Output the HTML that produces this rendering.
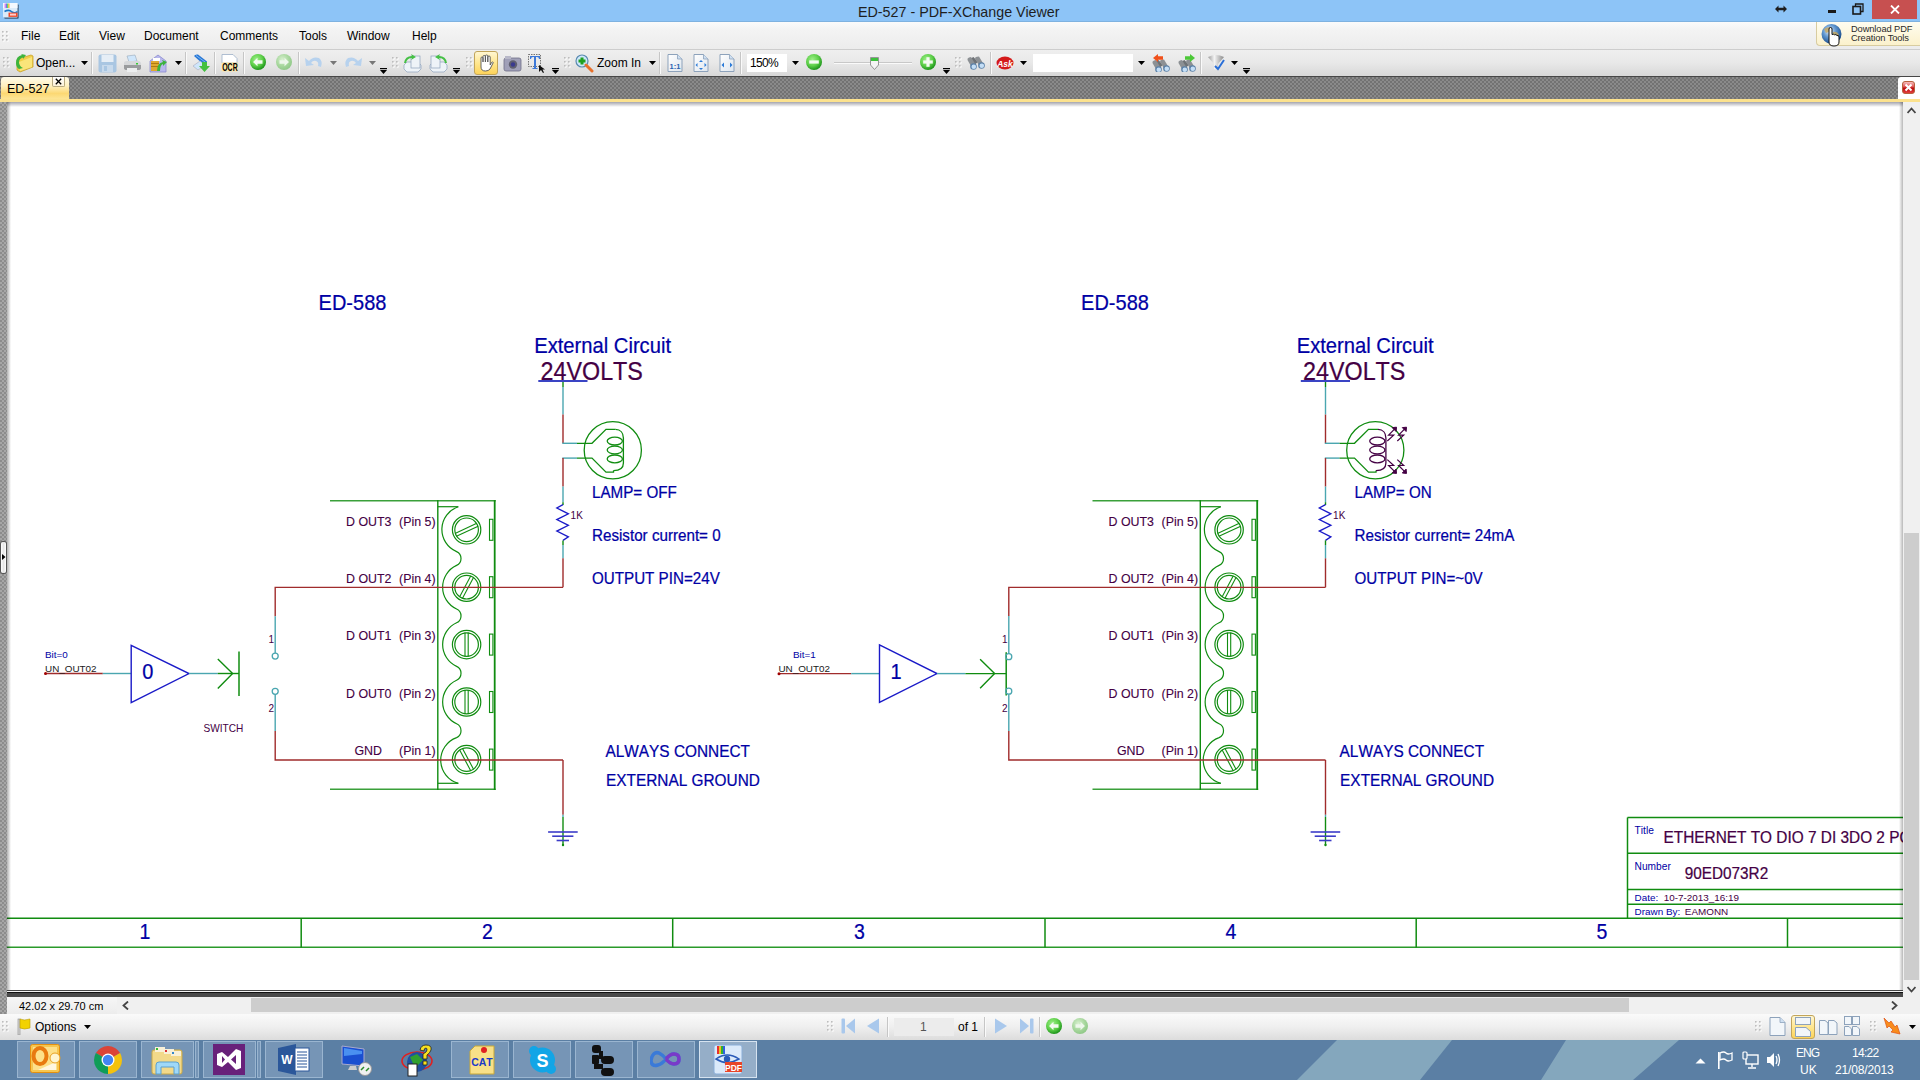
<!DOCTYPE html>
<html><head><meta charset="utf-8">
<style>
html,body{margin:0;padding:0;width:1920px;height:1080px;overflow:hidden;background:#fff;}
body{position:relative;font-family:"Liberation Sans",sans-serif;}
.a{position:absolute;}
svg text{font-family:"Liberation Sans",sans-serif;font-kerning:none;}

.tb{left:0;top:0;width:1920px;height:22px;background:#8dc4f7;box-shadow:inset 0 -1px 0 #7fb2e0;}
.menu{left:0;top:22px;width:1920px;height:27px;background:linear-gradient(#fbfbfb,#f3f3f3 30%,#ececec);}
.tool{left:0;top:49px;width:1920px;height:27px;border-top:1px solid #cdcdcd;box-sizing:border-box;background:linear-gradient(#efefef 0%,#e8e8e8 50%,#d8d8d8 100%);}
.tabbar{left:0;top:76px;width:1920px;height:23px;background-color:#727272;background-image:radial-gradient(circle at 1px 1px,#8a8a8a 0.8px,transparent 1.2px),radial-gradient(circle at 1px 1px,#8a8a8a 0.8px,transparent 1.2px);background-size:4px 4px;background-position:0 0,2px 2px;border-top:1px solid #474747;box-sizing:border-box;}
.yl{left:0;top:99px;width:1920px;height:3px;background:#fce28e;}
.lstrip{left:0;top:102px;width:7px;height:912px;background-color:#8c8c8c;background-image:radial-gradient(circle at 1px 1px,#a6a6a6 0.8px,transparent 1.2px),radial-gradient(circle at 1px 1px,#a6a6a6 0.8px,transparent 1.2px);background-size:4px 4px;background-position:0 0,2px 2px;}
.vscroll{left:1903px;top:102px;width:17px;height:895px;background:#f0f0f0;}
.mt{font-size:12px;color:#000;top:29px;line-height:14px;}
.tt{font-size:12px;color:#000;line-height:14px;}
.tbtn{top:1041px;height:37px;box-sizing:border-box;border:1px solid rgba(200,220,240,0.45);background:rgba(190,210,230,0.28);}
.wt{color:#fff;font-size:12px;line-height:14px;}

</style></head><body>
<div class="a tb"></div>
<svg class="a" style="left:3px;top:3px;" width="16" height="16" viewBox="0 0 16 16"><rect x="1.2" y="1.2" width="14.5" height="14.5" rx="1" fill="#3d5a78"/><rect x="0" y="0" width="14.5" height="14.5" rx="1" fill="#dcebfa"/><rect x="0" y="0" width="14.5" height="5" fill="#f4f8fe"/><rect x="1.3" y="0.5" width="1.3" height="4.5" fill="#f0a0f0"/><rect x="2.6" y="0.5" width="1.3" height="4.5" fill="#7a50f0"/><rect x="3.9" y="0.5" width="1.3" height="4.5" fill="#50e070"/><rect x="5.2" y="0.5" width="1.3" height="4.5" fill="#f8b030"/><path d="M1.5,8.5 Q6,6 9,9 Q12,11 14.5,8.5" fill="none" stroke="#1a78c8" stroke-width="1.6"/><rect x="5.5" y="9.6" width="9" height="4.3" fill="#f04a28"/><rect x="7" y="10.6" width="6" height="2" fill="#fcc"/></svg>
<div class="a" style="left:858px;top:4px;font-size:14.3px;line-height:17px;color:#1e1e1e;">ED-527 - PDF-XChange Viewer</div>
<svg class="a" style="left:1775px;top:5px;" width="12" height="8" viewBox="0 0 12 8"><path d="M0,4 L3.5,0.5 V2.8 H8.5 V0.5 L12,4 L8.5,7.5 V5.2 H3.5 V7.5 Z" fill="#1e1e1e"/></svg>
<div class="a" style="left:1828px;top:10px;width:8px;height:3px;background:#1a1a1a;"></div>
<svg class="a" style="left:1852px;top:3px;" width="12" height="12" viewBox="0 0 12 12"><rect x="1" y="3.5" width="7.5" height="7.5" fill="none" stroke="#1a1a1a" stroke-width="1.6"/><path d="M3.5,3.5 V1 H11 V8.5 H8.5" fill="none" stroke="#1a1a1a" stroke-width="1.3"/></svg>
<div class="a" style="left:1872px;top:0;width:45px;height:19px;background:#c75050;"></div>
<svg class="a" style="left:1890px;top:5px;" width="10" height="9" viewBox="0 0 10 9"><path d="M1,0.5 L9,8.5 M9,0.5 L1,8.5" stroke="#fff" stroke-width="1.8"/></svg>
<div class="a menu"></div>
<svg class="a" style="left:2px;top:31px;" width="8" height="12" viewBox="0 0 8 12"><rect x="1" y="1" width="1.6" height="1.6" fill="#fff"/><rect x="0" y="0" width="1.6" height="1.6" fill="#bdbdbd"/><rect x="5" y="1" width="1.6" height="1.6" fill="#fff"/><rect x="4" y="0" width="1.6" height="1.6" fill="#bdbdbd"/><rect x="1" y="5" width="1.6" height="1.6" fill="#fff"/><rect x="0" y="4" width="1.6" height="1.6" fill="#bdbdbd"/><rect x="5" y="5" width="1.6" height="1.6" fill="#fff"/><rect x="4" y="4" width="1.6" height="1.6" fill="#bdbdbd"/><rect x="1" y="9" width="1.6" height="1.6" fill="#fff"/><rect x="0" y="8" width="1.6" height="1.6" fill="#bdbdbd"/><rect x="5" y="9" width="1.6" height="1.6" fill="#fff"/><rect x="4" y="8" width="1.6" height="1.6" fill="#bdbdbd"/></svg>
<div class="a mt" style="left:21px">File</div>
<div class="a mt" style="left:59px">Edit</div>
<div class="a mt" style="left:99px">View</div>
<div class="a mt" style="left:144px">Document</div>
<div class="a mt" style="left:220px">Comments</div>
<div class="a mt" style="left:299px">Tools</div>
<div class="a mt" style="left:347px">Window</div>
<div class="a mt" style="left:412px">Help</div>
<div class="a" style="left:1816px;top:22px;width:104px;height:24px;box-sizing:border-box;border:1px solid #d8ccA0;border-top:none;border-right:none;border-radius:0 0 0 4px;background:linear-gradient(#fffdf0,#fbf1cc);"></div>
<svg class="a" style="left:1820px;top:23px;" width="24" height="24" viewBox="0 0 24 24"><defs><radialGradient id="glb" cx="40%" cy="35%" r="65%"><stop offset="0" stop-color="#e9f2fb"/><stop offset="0.5" stop-color="#5d95cf"/><stop offset="1" stop-color="#1d4f8e"/></radialGradient></defs><circle cx="11.5" cy="11" r="10" fill="url(#glb)"/><path d="M4,6 Q8,3 12,5 Q10,9 6,10 Z M13,9 Q18,8 19,13 Q16,17 13,15 Z" fill="#c9a85a" opacity="0.8"/><path d="M9,9 V19 Q9,23 14,23 Q19,23 19,19 V14 Q19,12 17,12.5 Q16,11 14.5,11.8 Q13.5,10.8 12,11.5 V6 Q12,4.5 10.5,4.5 Q9,4.5 9,6 Z" fill="#fff" stroke="#111" stroke-width="1"/></svg>
<div class="a" style="left:1851px;top:25px;font-size:9.3px;line-height:9px;color:#2a2a2a;letter-spacing:-0.1px;">Download PDF<br>Creation Tools</div>
<div class="a tool"></div>
<svg class="a" style="left:3px;top:57px;" width="8" height="12" viewBox="0 0 8 12"><rect x="1" y="1" width="1.6" height="1.6" fill="#fff"/><rect x="0" y="0" width="1.6" height="1.6" fill="#bdbdbd"/><rect x="5" y="1" width="1.6" height="1.6" fill="#fff"/><rect x="4" y="0" width="1.6" height="1.6" fill="#bdbdbd"/><rect x="1" y="5" width="1.6" height="1.6" fill="#fff"/><rect x="0" y="4" width="1.6" height="1.6" fill="#bdbdbd"/><rect x="5" y="5" width="1.6" height="1.6" fill="#fff"/><rect x="4" y="4" width="1.6" height="1.6" fill="#bdbdbd"/><rect x="1" y="9" width="1.6" height="1.6" fill="#fff"/><rect x="0" y="8" width="1.6" height="1.6" fill="#bdbdbd"/><rect x="5" y="9" width="1.6" height="1.6" fill="#fff"/><rect x="4" y="8" width="1.6" height="1.6" fill="#bdbdbd"/></svg>
<svg class="a" style="left:15px;top:54px;" width="19" height="19" viewBox="0 0 19 19"><path d="M2,6 L6,4 L16,1 L18,2 L18,13 L5,18 L2,16 Z" fill="#f1cf4a" stroke="#c9a22a" stroke-width="0.8"/><path d="M4,8 L17,3 V13 L5,17 Z" fill="#fae57a"/><path d="M1,9 Q1,2 7,1 L6,0 L11,1 L8,5 L8,3.5 Q4,4 4,9 Q5,13 8,14 L4,15 Q1,13 1,9 Z" fill="#3cb43c"/></svg>
<div class="a tt" style="left:36px;top:56px;">Open...</div>
<svg class="a" style="left:81px;top:61px;" width="7" height="4" viewBox="0 0 7 4"><path d="M0,0 H7 L3.5,4 Z" fill="#000"/></svg>
<div class="a" style="left:91px;top:52px;width:1px;height:22px;background:#c6c6c6;border-right:1px solid #fafafa;"></div>
<svg class="a" style="left:98px;top:54px;" width="19" height="19" viewBox="0 0 19 19"><rect x="0.5" y="0.5" width="18" height="18" rx="2" fill="#a9c6e2"/><rect x="3.5" y="1" width="12" height="7" fill="#e6eef6"/><rect x="4" y="11" width="11" height="7" fill="#c8daec"/><rect x="6" y="12" width="3" height="5" fill="#a9c6e2"/></svg>
<svg class="a" style="left:123px;top:54px;" width="19" height="19" viewBox="0 0 19 19"><path d="M4,2 L12,1 L14,7 L6,8 Z" fill="#cfe6fb" stroke="#9ab" stroke-width="0.6"/><path d="M1,9 Q1,7 4,7 H15 Q18,7 18,10 V14 Q18,16 15,16 H4 Q1,16 1,14 Z" fill="#d6d8da"/><path d="M1,11 H18 V14 Q18,16 15,16 H4 Q1,16 1,14 Z" fill="#9a9c9e"/><rect x="4" y="14" width="10" height="4" fill="#eceeef"/><rect x="13" y="9" width="2" height="1.5" fill="#3c3"/></svg>
<svg class="a" style="left:149px;top:54px;" width="19" height="19" viewBox="0 0 19 19"><path d="M1,7 L9,1 L17,7 V18 H1 Z" fill="#b8b8ec" stroke="#8a8ad0" stroke-width="0.8"/><rect x="2" y="7" width="8" height="10" fill="#e0a830"/><rect x="2" y="9" width="8" height="1" fill="#b07a10"/><rect x="2" y="12" width="8" height="1" fill="#b07a10"/><rect x="4" y="4" width="7" height="3" fill="#fff"/><path d="M8,17 Q8,9 14,8 L13,6 L18,8 L14,12 L14,10 Q11,11 11,17 Z" fill="#3cb43c"/></svg>
<svg class="a" style="left:175px;top:61px;" width="7" height="4" viewBox="0 0 7 4"><path d="M0,0 H7 L3.5,4 Z" fill="#000"/></svg>
<div class="a" style="left:185px;top:52px;width:1px;height:22px;background:#c6c6c6;border-right:1px solid #fafafa;"></div>
<svg class="a" style="left:192px;top:54px;" width="19" height="19" viewBox="0 0 19 19"><path d="M2,2 Q3,0 6,0.5 L15,7.5 L15,10 L11,10 Z" fill="#2a78d6"/><path d="M4,1.5 L13,8" stroke="#7ab8f4" stroke-width="1"/><path d="M1,12 L8,7 L13,11 L6,16 Z" fill="#cfe6fb" stroke="#aab" stroke-width="0.6"/><path d="M10,8 H15 V12 H18 L12.5,18 L7,12 H10 Z" fill="#44c040"/></svg>
<div class="a" style="left:214px;top:52px;width:1px;height:22px;background:#c6c6c6;border-right:1px solid #fafafa;"></div>
<svg class="a" style="left:221px;top:54px;" width="18" height="18" viewBox="0 0 18 18"><path d="M1,0.5 H12 L16,4.5 V9 H1 Z" fill="#fff" stroke="#9db0c8" stroke-width="0.8"/><rect x="0.5" y="8.5" width="16.5" height="9" rx="1" fill="#fde7a6"/><text x="1.2" y="17" font-size="10" font-weight="bold" textLength="15.5" lengthAdjust="spacingAndGlyphs" fill="#000" font-family="Liberation Sans">OCR</text></svg>
<div class="a" style="left:243px;top:52px;width:1px;height:22px;background:#c6c6c6;border-right:1px solid #fafafa;"></div>
<svg class="a" style="left:249px;top:53px;" width="18" height="18" viewBox="0 0 18 18"><defs><radialGradient id="g25862" cx="40%" cy="35%" r="70%"><stop offset="0" stop-color="#9ef08a"/><stop offset="0.55" stop-color="#5fd04a"/><stop offset="1" stop-color="#128a12"/></radialGradient></defs><circle cx="9" cy="9" r="8" fill="url(#g25862)"/><path d="M4,9 L8.5,4.8 V7.3 H13.5 V10.7 H8.5 V13.2 Z" fill="#f4fbf2"/></svg>
<svg class="a" style="left:275px;top:53px;" width="18" height="18" viewBox="0 0 18 18"><defs><radialGradient id="g28462" cx="40%" cy="35%" r="70%"><stop offset="0" stop-color="#d8f0d0"/><stop offset="0.55" stop-color="#a9d89f"/><stop offset="1" stop-color="#8cc684"/></radialGradient></defs><circle cx="9" cy="9" r="8" fill="url(#g28462)"/><path d="M14,9 L9.5,4.8 V7.3 H4.5 V10.7 H9.5 V13.2 Z" fill="#eef7ec"/></svg>
<div class="a" style="left:298px;top:52px;width:1px;height:22px;background:#c6c6c6;border-right:1px solid #fafafa;"></div>
<svg class="a" style="left:304px;top:54px;" width="20" height="17" viewBox="0 0 20 17"><path d="M2,12 L1,4 L5,7 Q9,2 15,4 Q19,7 17,13 L14,12 Q15,8 12,7 Q9,6 7,9 L10,11 Z" fill="#b7d2ee"/></svg>
<svg class="a" style="left:330px;top:61px;" width="7" height="4" viewBox="0 0 7 4"><path d="M0,0 H7 L3.5,4 Z" fill="#777"/></svg>
<svg class="a" style="left:343px;top:54px;" width="20" height="17" viewBox="0 0 20 17"><path d="M18,12 L19,4 L15,7 Q11,2 5,4 Q1,7 3,13 L6,12 Q5,8 8,7 Q11,6 13,9 L10,11 Z" fill="#b7d2ee"/></svg>
<svg class="a" style="left:369px;top:61px;" width="7" height="4" viewBox="0 0 7 4"><path d="M0,0 H7 L3.5,4 Z" fill="#777"/></svg>
<svg class="a" style="left:380px;top:68px;" width="7" height="6" viewBox="0 0 7 6"><rect x="0" y="0" width="7" height="1.2" fill="#000"/><path d="M0,2 H7 L3.5,6 Z" fill="#000"/></svg>
<svg class="a" style="left:392px;top:57px;" width="8" height="12" viewBox="0 0 8 12"><rect x="1" y="1" width="1.6" height="1.6" fill="#fff"/><rect x="0" y="0" width="1.6" height="1.6" fill="#bdbdbd"/><rect x="5" y="1" width="1.6" height="1.6" fill="#fff"/><rect x="4" y="0" width="1.6" height="1.6" fill="#bdbdbd"/><rect x="1" y="5" width="1.6" height="1.6" fill="#fff"/><rect x="0" y="4" width="1.6" height="1.6" fill="#bdbdbd"/><rect x="5" y="5" width="1.6" height="1.6" fill="#fff"/><rect x="4" y="4" width="1.6" height="1.6" fill="#bdbdbd"/><rect x="1" y="9" width="1.6" height="1.6" fill="#fff"/><rect x="0" y="8" width="1.6" height="1.6" fill="#bdbdbd"/><rect x="5" y="9" width="1.6" height="1.6" fill="#fff"/><rect x="4" y="8" width="1.6" height="1.6" fill="#bdbdbd"/></svg>
<svg class="a" style="left:403px;top:54px;" width="19" height="19" viewBox="0 0 19 19"><path d="M1,11 L4,8 H15 L18,11 V15 L15,18 H4 L1,15 Z" fill="#eef3f8" stroke="#8da2bb" stroke-width="0.7"/><rect x="8" y="2" width="9" height="12" fill="#eef3f8" stroke="#8da2bb" stroke-width="0.7"/><path d="M1,9 Q2,2 9,2 L8,0 L13,3 L8,6 L9,4 Q4,4 3,9 Z" fill="#45c045"/></svg>
<svg class="a" style="left:429px;top:54px;" width="19" height="19" viewBox="0 0 19 19"><path d="M1,11 L4,8 H15 L18,11 V15 L15,18 H4 L1,15 Z" fill="#eef3f8" stroke="#8da2bb" stroke-width="0.7"/><rect x="2" y="2" width="9" height="12" fill="#eef3f8" stroke="#8da2bb" stroke-width="0.7"/><path d="M18,9 Q17,2 10,2 L11,0 L6,3 L11,6 L10,4 Q15,4 16,9 Z" fill="#45c045"/></svg>
<svg class="a" style="left:453px;top:68px;" width="7" height="6" viewBox="0 0 7 6"><rect x="0" y="0" width="7" height="1.2" fill="#000"/><path d="M0,2 H7 L3.5,6 Z" fill="#000"/></svg>
<svg class="a" style="left:466px;top:57px;" width="8" height="12" viewBox="0 0 8 12"><rect x="1" y="1" width="1.6" height="1.6" fill="#fff"/><rect x="0" y="0" width="1.6" height="1.6" fill="#bdbdbd"/><rect x="5" y="1" width="1.6" height="1.6" fill="#fff"/><rect x="4" y="0" width="1.6" height="1.6" fill="#bdbdbd"/><rect x="1" y="5" width="1.6" height="1.6" fill="#fff"/><rect x="0" y="4" width="1.6" height="1.6" fill="#bdbdbd"/><rect x="5" y="5" width="1.6" height="1.6" fill="#fff"/><rect x="4" y="4" width="1.6" height="1.6" fill="#bdbdbd"/><rect x="1" y="9" width="1.6" height="1.6" fill="#fff"/><rect x="0" y="8" width="1.6" height="1.6" fill="#bdbdbd"/><rect x="5" y="9" width="1.6" height="1.6" fill="#fff"/><rect x="4" y="8" width="1.6" height="1.6" fill="#bdbdbd"/></svg>
<div class="a" style="left:474px;top:51px;width:24px;height:24px;box-sizing:border-box;border:1px solid #c2a55a;border-radius:3px;background:linear-gradient(#fff6d2,#ffe58a 55%,#fdd35a);"></div>
<svg class="a" style="left:477px;top:54px;" width="18" height="18" viewBox="0 0 18 18"><path d="M4,9 V4 Q4,3 5,3 Q6,3 6,4 V8 V2.5 Q6,1.5 7.2,1.5 Q8.4,1.5 8.4,2.5 V8 V2 Q8.4,1 9.6,1 Q10.8,1 10.8,2 V8 V3 Q10.8,2 12,2 Q13.2,2 13.2,3 V11 L14.5,8.5 Q15.5,7.5 16.3,8.5 L13,15 Q11.5,17 8.5,17 Q4,17 4,13 Z" fill="#fff" stroke="#555" stroke-width="0.9"/></svg>
<svg class="a" style="left:503px;top:55px;" width="19" height="17" viewBox="0 0 19 17"><rect x="1" y="3" width="17" height="13" rx="2" fill="#a0a0b8" stroke="#707088" stroke-width="0.8"/><rect x="2" y="1" width="6" height="3" fill="#b8b8c8"/><circle cx="10" cy="9.5" r="4.2" fill="#606070"/><circle cx="10" cy="9.5" r="2.2" fill="#3a3a90"/></svg>
<svg class="a" style="left:528px;top:54px;" width="19" height="19" viewBox="0 0 19 19"><rect x="0.5" y="0.5" width="12" height="12" fill="none" stroke="#555" stroke-width="0.8" stroke-dasharray="1.5,1"/><path d="M2,2 H12 V5 H11 Q11,3 9,3 H8 V14 H9.5 V15 H4.5 V14 H6 V3 H5 Q3,3 3,5 H2 Z" fill="#3c78d8"/><path d="M11,11 L11,18 L13,16 L15,19 L16,18.5 L14.5,15.5 L17,15.5 Z" fill="#111"/></svg>
<svg class="a" style="left:552px;top:68px;" width="7" height="6" viewBox="0 0 7 6"><rect x="0" y="0" width="7" height="1.2" fill="#000"/><path d="M0,2 H7 L3.5,6 Z" fill="#000"/></svg>
<svg class="a" style="left:564px;top:57px;" width="8" height="12" viewBox="0 0 8 12"><rect x="1" y="1" width="1.6" height="1.6" fill="#fff"/><rect x="0" y="0" width="1.6" height="1.6" fill="#bdbdbd"/><rect x="5" y="1" width="1.6" height="1.6" fill="#fff"/><rect x="4" y="0" width="1.6" height="1.6" fill="#bdbdbd"/><rect x="1" y="5" width="1.6" height="1.6" fill="#fff"/><rect x="0" y="4" width="1.6" height="1.6" fill="#bdbdbd"/><rect x="5" y="5" width="1.6" height="1.6" fill="#fff"/><rect x="4" y="4" width="1.6" height="1.6" fill="#bdbdbd"/><rect x="1" y="9" width="1.6" height="1.6" fill="#fff"/><rect x="0" y="8" width="1.6" height="1.6" fill="#bdbdbd"/><rect x="5" y="9" width="1.6" height="1.6" fill="#fff"/><rect x="4" y="8" width="1.6" height="1.6" fill="#bdbdbd"/></svg>
<svg class="a" style="left:575px;top:54px;" width="19" height="19" viewBox="0 0 19 19"><circle cx="7" cy="7" r="6" fill="#cfe8fb" stroke="#5a8ab0" stroke-width="1.2"/><path d="M5.5,3.5 H8.5 V5.5 H10.5 V8.5 H8.5 V10.5 H5.5 V8.5 H3.5 V5.5 H5.5 Z" fill="#20a020"/><path d="M11,11 L17,17" stroke="#e8702a" stroke-width="3" stroke-linecap="round"/></svg>
<div class="a tt" style="left:597px;top:56px;">Zoom In</div>
<svg class="a" style="left:649px;top:61px;" width="7" height="4" viewBox="0 0 7 4"><path d="M0,0 H7 L3.5,4 Z" fill="#000"/></svg>
<div class="a" style="left:659px;top:52px;width:1px;height:22px;background:#c6c6c6;border-right:1px solid #fafafa;"></div>
<svg class="a" style="left:667px;top:54px;" width="16" height="18" viewBox="0 0 16 18"><defs><linearGradient id="pg" x1="0" y1="0" x2="1" y2="1"><stop offset="0" stop-color="#ffffff"/><stop offset="1" stop-color="#dfe6ee"/></linearGradient></defs><path d="M1,0.5 H10.5 L15,5 V17.5 H1 Z" fill="url(#pg)" stroke="#8da2bb" stroke-width="1"/><path d="M10.5,0.5 V5 H15" fill="#cfe0f2" stroke="#8da2bb" stroke-width="0.8"/><text x="8" y="15" font-size="7.5" font-weight="bold" text-anchor="middle" fill="#2a62b0" font-family="Liberation Sans">1:1</text></svg>
<svg class="a" style="left:693px;top:54px;" width="16" height="18" viewBox="0 0 16 18"><defs><linearGradient id="pg" x1="0" y1="0" x2="1" y2="1"><stop offset="0" stop-color="#ffffff"/><stop offset="1" stop-color="#dfe6ee"/></linearGradient></defs><path d="M1,0.5 H10.5 L15,5 V17.5 H1 Z" fill="url(#pg)" stroke="#8da2bb" stroke-width="1"/><path d="M10.5,0.5 V5 H15" fill="#cfe0f2" stroke="#8da2bb" stroke-width="0.8"/><path d="M8,6 L10,8 H6 Z M8,16 L10,14 H6 Z M2.5,11 L4.5,9 V13 Z M13.5,11 L11.5,9 V13 Z" fill="#2a7ad8"/></svg>
<svg class="a" style="left:719px;top:54px;" width="16" height="18" viewBox="0 0 16 18"><defs><linearGradient id="pg" x1="0" y1="0" x2="1" y2="1"><stop offset="0" stop-color="#ffffff"/><stop offset="1" stop-color="#dfe6ee"/></linearGradient></defs><path d="M1,0.5 H10.5 L15,5 V17.5 H1 Z" fill="url(#pg)" stroke="#8da2bb" stroke-width="1"/><path d="M10.5,0.5 V5 H15" fill="#cfe0f2" stroke="#8da2bb" stroke-width="0.8"/><path d="M2.5,11 L5,8.5 V13.5 Z M13.5,11 L11,8.5 V13.5 Z" fill="#2a7ad8"/></svg>
<div class="a" style="left:740px;top:52px;width:1px;height:22px;background:#c6c6c6;border-right:1px solid #fafafa;"></div>
<div class="a" style="left:747px;top:54px;width:40px;height:18px;background:#fff;"></div>
<div class="a tt" style="left:750px;top:56px;letter-spacing:-0.7px;">150%</div>
<svg class="a" style="left:792px;top:61px;" width="7" height="4" viewBox="0 0 7 4"><path d="M0,0 H7 L3.5,4 Z" fill="#000"/></svg>
<svg class="a" style="left:805px;top:53px;" width="18" height="18" viewBox="0 0 18 18"><defs><radialGradient id="g81462" cx="40%" cy="35%" r="70%"><stop offset="0" stop-color="#9ef08a"/><stop offset="0.55" stop-color="#5fd04a"/><stop offset="1" stop-color="#128a12"/></radialGradient></defs><circle cx="9" cy="9" r="8" fill="url(#g81462)"/><rect x="4.2" y="7.4" width="9.6" height="3.2" fill="#f4fbf2"/></svg>
<div class="a" style="left:834px;top:62px;width:78px;height:1px;background:#c8c8c8;border-bottom:1px solid #fafafa;"></div>
<svg class="a" style="left:870px;top:57px;" width="9" height="13" viewBox="0 0 9 13"><path d="M0.5,0.5 H8.5 V8 L4.5,12.5 L0.5,8 Z" fill="#f4f4f4" stroke="#8a8a8a" stroke-width="0.9"/><rect x="1" y="1" width="7" height="3" fill="#3cc03c"/></svg>
<svg class="a" style="left:919px;top:53px;" width="18" height="18" viewBox="0 0 18 18"><defs><radialGradient id="g92862" cx="40%" cy="35%" r="70%"><stop offset="0" stop-color="#9ef08a"/><stop offset="0.55" stop-color="#5fd04a"/><stop offset="1" stop-color="#128a12"/></radialGradient></defs><circle cx="9" cy="9" r="8" fill="url(#g92862)"/><rect x="4.2" y="7.4" width="9.6" height="3.2" fill="#f4fbf2"/><rect x="7.4" y="4.2" width="3.2" height="9.6" fill="#f4fbf2"/></svg>
<svg class="a" style="left:943px;top:68px;" width="7" height="6" viewBox="0 0 7 6"><rect x="0" y="0" width="7" height="1.2" fill="#000"/><path d="M0,2 H7 L3.5,6 Z" fill="#000"/></svg>
<svg class="a" style="left:955px;top:57px;" width="8" height="12" viewBox="0 0 8 12"><rect x="1" y="1" width="1.6" height="1.6" fill="#fff"/><rect x="0" y="0" width="1.6" height="1.6" fill="#bdbdbd"/><rect x="5" y="1" width="1.6" height="1.6" fill="#fff"/><rect x="4" y="0" width="1.6" height="1.6" fill="#bdbdbd"/><rect x="1" y="5" width="1.6" height="1.6" fill="#fff"/><rect x="0" y="4" width="1.6" height="1.6" fill="#bdbdbd"/><rect x="5" y="5" width="1.6" height="1.6" fill="#fff"/><rect x="4" y="4" width="1.6" height="1.6" fill="#bdbdbd"/><rect x="1" y="9" width="1.6" height="1.6" fill="#fff"/><rect x="0" y="8" width="1.6" height="1.6" fill="#bdbdbd"/><rect x="5" y="9" width="1.6" height="1.6" fill="#fff"/><rect x="4" y="8" width="1.6" height="1.6" fill="#bdbdbd"/></svg>
<svg class="a" style="left:966px;top:55px;" width="20" height="16" viewBox="0 0 20 16"><g><path d="M2.5,4.5 L7.5,2 L12,7 L7,11 Z" fill="#6e7276"/><path d="M1.5,5 Q1,3 3,2.5 L5,2 L9.5,9.5 L5.5,12 Z" fill="#8c9094"/><path d="M9,3.5 Q9,2 11,1.8 L13,1.5 L17.5,9 L13.5,11.5 Z" fill="#8c9094"/><circle cx="7.5" cy="11.5" r="3.3" fill="#5a80a8"/><circle cx="7.8" cy="11.7" r="2.3" fill="#c4def6"/><circle cx="15.5" cy="10.5" r="3.3" fill="#5a80a8"/><circle cx="15.8" cy="10.7" r="2.3" fill="#c4def6"/></g></svg>
<div class="a" style="left:990px;top:52px;width:1px;height:22px;background:#c6c6c6;border-right:1px solid #fafafa;"></div>
<svg class="a" style="left:996px;top:56px;" width="18" height="14" viewBox="0 0 18 14"><ellipse cx="9" cy="7" rx="8.5" ry="6.5" fill="#d41a1a"/><text x="9" y="10.5" font-size="8.5" font-weight="bold" font-style="italic" text-anchor="middle" fill="#fff" font-family="Liberation Sans">Ask</text></svg>
<svg class="a" style="left:1020px;top:61px;" width="7" height="4" viewBox="0 0 7 4"><path d="M0,0 H7 L3.5,4 Z" fill="#000"/></svg>
<div class="a" style="left:1033px;top:54px;width:100px;height:18px;background:#fff;"></div>
<svg class="a" style="left:1138px;top:61px;" width="7" height="4" viewBox="0 0 7 4"><path d="M0,0 H7 L3.5,4 Z" fill="#000"/></svg>
<svg class="a" style="left:1151px;top:54px;" width="20" height="18" viewBox="0 0 20 18"><g transform="translate(0,4)"><g><path d="M2.5,4.5 L7.5,2 L12,7 L7,11 Z" fill="#6e7276"/><path d="M1.5,5 Q1,3 3,2.5 L5,2 L9.5,9.5 L5.5,12 Z" fill="#8c9094"/><path d="M9,3.5 Q9,2 11,1.8 L13,1.5 L17.5,9 L13.5,11.5 Z" fill="#8c9094"/><circle cx="7.5" cy="11.5" r="3.3" fill="#5a80a8"/><circle cx="7.8" cy="11.7" r="2.3" fill="#c4def6"/><circle cx="15.5" cy="10.5" r="3.3" fill="#5a80a8"/><circle cx="15.8" cy="10.7" r="2.3" fill="#c4def6"/></g></g><path d="M2,4 L7,0 V2.2 H12 V5.8 H7 V8 Z" fill="#f0501a"/></svg>
<svg class="a" style="left:1177px;top:54px;" width="20" height="18" viewBox="0 0 20 18"><g transform="translate(0,4)"><g><path d="M2.5,4.5 L7.5,2 L12,7 L7,11 Z" fill="#6e7276"/><path d="M1.5,5 Q1,3 3,2.5 L5,2 L9.5,9.5 L5.5,12 Z" fill="#8c9094"/><path d="M9,3.5 Q9,2 11,1.8 L13,1.5 L17.5,9 L13.5,11.5 Z" fill="#8c9094"/><circle cx="7.5" cy="11.5" r="3.3" fill="#5a80a8"/><circle cx="7.8" cy="11.7" r="2.3" fill="#c4def6"/><circle cx="15.5" cy="10.5" r="3.3" fill="#5a80a8"/><circle cx="15.8" cy="10.7" r="2.3" fill="#c4def6"/></g></g><path d="M18,4 L13,0 V2.2 H8 V5.8 H13 V8 Z" fill="#4cc838"/></svg>
<div class="a" style="left:1200px;top:52px;width:1px;height:22px;background:#c6c6c6;border-right:1px solid #fafafa;"></div>
<svg class="a" style="left:1207px;top:54px;" width="19" height="18" viewBox="0 0 19 18"><defs><linearGradient id="fn" x1="0" x2="1"><stop offset="0" stop-color="#9a9a9a"/><stop offset="0.4" stop-color="#f4f4f4"/><stop offset="1" stop-color="#888"/></linearGradient></defs><path d="M1,3 Q9,-1 17,3 L11,10 V17 L7,15 V10 Z" fill="url(#fn)"/><path d="M8,12 L11,15 L17,6" fill="none" stroke="#2a6fd8" stroke-width="2"/></svg>
<svg class="a" style="left:1231px;top:61px;" width="7" height="4" viewBox="0 0 7 4"><path d="M0,0 H7 L3.5,4 Z" fill="#000"/></svg>
<svg class="a" style="left:1243px;top:68px;" width="7" height="6" viewBox="0 0 7 6"><rect x="0" y="0" width="7" height="1.2" fill="#000"/><path d="M0,2 H7 L3.5,6 Z" fill="#000"/></svg>
<div class="a tabbar"></div>
<div class="a" style="left:1px;top:77px;width:68px;height:22px;background:linear-gradient(#fffbea,#fff1c0 40%,#fcd873 75%,#fde595);border-radius:3px 3px 0 0;"></div>
<div class="a" style="left:52px;top:77px;width:13px;height:10px;box-sizing:border-box;border:1px solid #b8aa80;border-top:none;border-radius:0 0 2px 2px;background:linear-gradient(#fff,#fdf3d8);"></div>
<svg class="a" style="left:55px;top:78px;" width="7" height="7" viewBox="0 0 7 7"><path d="M0.8,0.8 L6.2,6.2 M6.2,0.8 L0.8,6.2" stroke="#000" stroke-width="1.3"/></svg>
<div class="a" style="left:7px;top:82px;font-size:12.5px;line-height:14px;color:#000;">ED-527</div>
<div class="a" style="left:1898px;top:77px;width:22px;height:22px;background:#fff;border-radius:3px 0 0 0;"></div>
<svg class="a" style="left:1902px;top:81px;" width="13" height="13" viewBox="0 0 13 13"><defs><linearGradient id="rc" x1="0" y1="0" x2="0" y2="1"><stop offset="0" stop-color="#f8c8c8"/><stop offset="0.45" stop-color="#e05050"/><stop offset="0.55" stop-color="#b80c0c"/><stop offset="1" stop-color="#e84040"/></linearGradient></defs><rect x="0.5" y="0.5" width="12" height="12" rx="2.5" fill="url(#rc)" stroke="#b8603c"/><path d="M3.5,3.5 L9.5,9.5 M9.5,3.5 L3.5,9.5" stroke="#fff" stroke-width="2"/></svg>
<div class="a yl"></div>
<div class="a lstrip"></div>
<div class="a vscroll"></div>
<div class="a" style="left:1px;top:542px;width:5px;height:31px;background:linear-gradient(90deg,#fff,#e6e6e6 50%,#fff);border-radius:2px;box-shadow:0 0 0 1px #555;"></div>
<svg class="a" style="left:2px;top:554px;" width="4" height="6" viewBox="0 0 4 6"><path d="M0,0 L3.5,3 L0,6 Z" fill="#000"/></svg>
<svg class="a" style="left:1907px;top:107px;" width="9" height="7" viewBox="0 0 9 7"><path d="M0.5,6 L4.5,1.5 L8.5,6" fill="none" stroke="#444" stroke-width="1.8"/></svg>
<div class="a" style="left:7px;top:102px;width:1896px;height:895px;overflow:hidden;background:#fff;">
<svg width="1920" height="1080" style="position:absolute;left:-7px;top:-102px;">
<text transform="translate(318.6,309.7) scale(1,1.09)" x="0" y="0" font-size="20" fill="#0000a4" stroke="#0000a4" stroke-width="0.22" text-anchor="start" >ED-588</text>
<text transform="translate(534.2,352.7) scale(1,1.09)" x="0" y="0" font-size="20.2" fill="#0000a4" stroke="#0000a4" stroke-width="0.22" text-anchor="start" >External Circuit</text>
<text transform="translate(540.6,380) scale(1,1.09)" x="0" y="0" font-size="23.3" fill="#440044" stroke="#440044" stroke-width="0.22" text-anchor="start" >24VOLTS</text>
<line x1="538.3" y1="381" x2="587.5" y2="381" stroke="#3a44c4" stroke-width="2" />
<line x1="563" y1="382" x2="563" y2="387" stroke="#108c10" stroke-width="1.4" />
<line x1="563" y1="387" x2="563" y2="414.6" stroke="#4aa6b0" stroke-width="1.4" />
<line x1="563" y1="414.6" x2="563" y2="443.3" stroke="#a02c2c" stroke-width="1.4" />
<line x1="562.3" y1="443.3" x2="577" y2="443.3" stroke="#4aa6b0" stroke-width="1.4" />
<line x1="562.3" y1="458.1" x2="577" y2="458.1" stroke="#4aa6b0" stroke-width="1.4" />
<line x1="563" y1="458.1" x2="563" y2="486.6" stroke="#a02c2c" stroke-width="1.4" />
<line x1="563" y1="486.6" x2="563" y2="502.2" stroke="#4aa6b0" stroke-width="1.4" />
<line x1="563" y1="502.2" x2="563" y2="505" stroke="#108c10" stroke-width="1.4" />
<path d="M563,504.6 L556.8,508 L568.4,513.8 L556.8,519.6 L568.4,525.3 L556.8,531.1 L568.4,536.9 L563,540.4" stroke="#1a1ac8" stroke-width="1.3" fill="none" />
<line x1="563" y1="540.4" x2="563" y2="545" stroke="#108c10" stroke-width="1.4" />
<line x1="563" y1="545" x2="563" y2="558.3" stroke="#4aa6b0" stroke-width="1.4" />
<line x1="563" y1="558.3" x2="563" y2="587.3" stroke="#a02c2c" stroke-width="1.4" />
<text transform="translate(570.6,519) scale(1,1.0)" x="0" y="0" font-size="10" fill="#440044" stroke="#440044" stroke-width="0" text-anchor="start" >1K</text>
<circle cx="612.8" cy="450.3" r="28.6" stroke="#108c10" stroke-width="1.3" fill="none"/>
<path d="M577,443.3 H592 L606,429.4 H615.5" stroke="#108c10" stroke-width="1.3" fill="none" />
<path d="M577,458.1 H592 L606,472.2 H613.5 V470.6" stroke="#108c10" stroke-width="1.3" fill="none" />
<path d="M615.5,429.4 C620.5,429.4 623.4,433 623.4,438 V463 C623.4,468 620.5,470.6 613.5,470.6" stroke="#108c10" stroke-width="1.3" fill="none" />
<ellipse cx="614.8" cy="441.1" rx="7.6" ry="3.9" stroke="#108c10" stroke-width="1.3" fill="none"/>
<ellipse cx="614.8" cy="450.0" rx="7.6" ry="3.9" stroke="#108c10" stroke-width="1.3" fill="none"/>
<ellipse cx="614.8" cy="458.9" rx="7.6" ry="3.9" stroke="#108c10" stroke-width="1.3" fill="none"/>
<line x1="563" y1="760" x2="563" y2="814.8" stroke="#a02c2c" stroke-width="1.4" />
<line x1="563" y1="814.8" x2="563" y2="817" stroke="#4aa6b0" stroke-width="1.4" />
<line x1="563" y1="817" x2="563" y2="845" stroke="#108c10" stroke-width="1.4" />
<line x1="548.1" y1="832" x2="577.7" y2="832" stroke="#3c3cc8" stroke-width="1.6" />
<line x1="552.2" y1="836.2" x2="573.4" y2="836.2" stroke="#3c3cc8" stroke-width="1.6" />
<line x1="556.6" y1="840.5" x2="569" y2="840.5" stroke="#3c3cc8" stroke-width="1.6" />
<circle cx="563" cy="845" r="1.2" fill="#108c10"/>
<text transform="translate(592,497.8) scale(1,1.09)" x="0" y="0" font-size="15.2" fill="#0000a4" stroke="#0000a4" stroke-width="0.22" text-anchor="start" >LAMP= OFF</text>
<text transform="translate(592,540.9) scale(1,1.09)" x="0" y="0" font-size="15.2" fill="#0000a4" stroke="#0000a4" stroke-width="0.22" text-anchor="start" >Resistor current= 0</text>
<text transform="translate(592,584) scale(1,1.09)" x="0" y="0" font-size="15.2" fill="#0000a4" stroke="#0000a4" stroke-width="0.22" text-anchor="start" >OUTPUT PIN=24V</text>
<text transform="translate(605.5,757) scale(1,1.09)" x="0" y="0" font-size="15.4" fill="#0000a4" stroke="#0000a4" stroke-width="0.22" text-anchor="start" >ALWAYS CONNECT</text>
<text transform="translate(606,786.1) scale(1,1.09)" x="0" y="0" font-size="15.4" fill="#0000a4" stroke="#0000a4" stroke-width="0.22" text-anchor="start" >EXTERNAL GROUND</text>
<line x1="330" y1="500.8" x2="495.7" y2="500.8" stroke="#3aa03a" stroke-width="1.5" />
<line x1="330" y1="789.2" x2="495.7" y2="789.2" stroke="#3aa03a" stroke-width="1.5" />
<line x1="437.8" y1="500" x2="437.8" y2="790" stroke="#108c10" stroke-width="1.4" />
<line x1="494.7" y1="500" x2="494.7" y2="790" stroke="#108c10" stroke-width="1.8" />
<path d="M437.8,506.7 H458.3" stroke="#108c10" stroke-width="1.2" fill="none" />
<path d="M437.8,783.3 H458.3" stroke="#108c10" stroke-width="1.2" fill="none" />
<path d="M458.3,506.7 A24,24 0 0 0 456.6,551.5999999999999 A7.6,7.6 0 0 1 456.6,565.4 A24,24 0 0 0 456.6,609.0 A7.6,7.6 0 0 1 456.6,622.8000000000001 A24,24 0 0 0 456.6,666.4 A7.6,7.6 0 0 1 456.6,680.2 A24,24 0 0 0 456.6,723.8 A7.6,7.6 0 0 1 456.6,737.6 A24,24 0 0 0 458.3,783.3" stroke="#108c10" stroke-width="1.2" fill="none" />
<circle cx="466.6" cy="529.8" r="14.2" stroke="#108c10" stroke-width="1.2" fill="none"/>
<circle cx="466.6" cy="529.8" r="11.8" stroke="#108c10" stroke-width="1.2" fill="none"/>
<line x1="455.05" y1="533.42" x2="476.8" y2="523.28" stroke="#108c10" stroke-width="1.1" />
<line x1="456.4" y1="536.32" x2="478.15" y2="526.18" stroke="#108c10" stroke-width="1.1" />
<rect x="489.5" y="519.3" width="3.4" height="21" stroke="#108c10" stroke-width="1.1" fill="none"/>
<circle cx="466.6" cy="587.2" r="14.2" stroke="#108c10" stroke-width="1.2" fill="none"/>
<circle cx="466.6" cy="587.2" r="11.8" stroke="#108c10" stroke-width="1.2" fill="none"/>
<line x1="459.55" y1="597.04" x2="470.82" y2="575.85" stroke="#108c10" stroke-width="1.1" />
<line x1="462.38" y1="598.55" x2="473.65" y2="577.36" stroke="#108c10" stroke-width="1.1" />
<rect x="489.5" y="576.7" width="3.4" height="21" stroke="#108c10" stroke-width="1.1" fill="none"/>
<circle cx="466.6" cy="644.6" r="14.2" stroke="#108c10" stroke-width="1.2" fill="none"/>
<circle cx="466.6" cy="644.6" r="11.8" stroke="#108c10" stroke-width="1.2" fill="none"/>
<line x1="468.2" y1="632.6" x2="468.2" y2="656.6" stroke="#108c10" stroke-width="1.1" />
<line x1="465.0" y1="632.6" x2="465.0" y2="656.6" stroke="#108c10" stroke-width="1.1" />
<rect x="489.5" y="634.1" width="3.4" height="21" stroke="#108c10" stroke-width="1.1" fill="none"/>
<circle cx="466.6" cy="702.0" r="14.2" stroke="#108c10" stroke-width="1.2" fill="none"/>
<circle cx="466.6" cy="702.0" r="11.8" stroke="#108c10" stroke-width="1.2" fill="none"/>
<line x1="468.2" y1="690.0" x2="468.2" y2="714.0" stroke="#108c10" stroke-width="1.1" />
<line x1="465.0" y1="690.0" x2="465.0" y2="714.0" stroke="#108c10" stroke-width="1.1" />
<rect x="489.5" y="691.5" width="3.4" height="21" stroke="#108c10" stroke-width="1.1" fill="none"/>
<circle cx="466.6" cy="759.6" r="14.2" stroke="#108c10" stroke-width="1.2" fill="none"/>
<circle cx="466.6" cy="759.6" r="11.8" stroke="#108c10" stroke-width="1.2" fill="none"/>
<line x1="462.38" y1="748.25" x2="473.65" y2="769.44" stroke="#108c10" stroke-width="1.1" />
<line x1="459.55" y1="749.76" x2="470.82" y2="770.95" stroke="#108c10" stroke-width="1.1" />
<rect x="489.5" y="749.1" width="3.4" height="21" stroke="#108c10" stroke-width="1.1" fill="none"/>
<text transform="translate(391.5,525.5) scale(1,1.05)" x="0" y="0" font-size="12.4" fill="#440044" stroke="#440044" stroke-width="0.1" text-anchor="end" >D OUT3</text>
<text transform="translate(435.6,525.5) scale(1,1.05)" x="0" y="0" font-size="12.4" fill="#440044" stroke="#440044" stroke-width="0.1" text-anchor="end" >(Pin 5)</text>
<text transform="translate(391.5,582.9) scale(1,1.05)" x="0" y="0" font-size="12.4" fill="#440044" stroke="#440044" stroke-width="0.1" text-anchor="end" >D OUT2</text>
<text transform="translate(435.6,582.9) scale(1,1.05)" x="0" y="0" font-size="12.4" fill="#440044" stroke="#440044" stroke-width="0.1" text-anchor="end" >(Pin 4)</text>
<text transform="translate(391.5,640.2) scale(1,1.05)" x="0" y="0" font-size="12.4" fill="#440044" stroke="#440044" stroke-width="0.1" text-anchor="end" >D OUT1</text>
<text transform="translate(435.6,640.2) scale(1,1.05)" x="0" y="0" font-size="12.4" fill="#440044" stroke="#440044" stroke-width="0.1" text-anchor="end" >(Pin 3)</text>
<text transform="translate(391.5,697.5) scale(1,1.05)" x="0" y="0" font-size="12.4" fill="#440044" stroke="#440044" stroke-width="0.1" text-anchor="end" >D OUT0</text>
<text transform="translate(435.6,697.5) scale(1,1.05)" x="0" y="0" font-size="12.4" fill="#440044" stroke="#440044" stroke-width="0.1" text-anchor="end" >(Pin 2)</text>
<text transform="translate(382,754.9) scale(1,1.05)" x="0" y="0" font-size="12.4" fill="#440044" stroke="#440044" stroke-width="0.1" text-anchor="end" >GND</text>
<text transform="translate(435.6,754.9) scale(1,1.05)" x="0" y="0" font-size="12.4" fill="#440044" stroke="#440044" stroke-width="0.1" text-anchor="end" >(Pin 1)</text>
<path d="M275.2,616.3 V587.4 H563" stroke="#a02c2c" stroke-width="1.4" fill="none" />
<path d="M275.2,731 V760 H563" stroke="#a02c2c" stroke-width="1.4" fill="none" />
<line x1="275.2" y1="616.3" x2="275.2" y2="653" stroke="#4aa6b0" stroke-width="1.4" />
<line x1="275.2" y1="694.3" x2="275.2" y2="731" stroke="#4aa6b0" stroke-width="1.4" />
<circle cx="275.2" cy="656.1" r="3" stroke="#4aa6b0" stroke-width="1.3" fill="#fff"/>
<circle cx="275.2" cy="691.3" r="3" stroke="#4aa6b0" stroke-width="1.3" fill="#fff"/>
<text transform="translate(268.5,642.8) scale(1,1.0)" x="0" y="0" font-size="10" fill="#440044" stroke="#440044" stroke-width="0" text-anchor="start" >1</text>
<text transform="translate(268.5,712) scale(1,1.0)" x="0" y="0" font-size="10" fill="#440044" stroke="#440044" stroke-width="0" text-anchor="start" >2</text>
<text transform="translate(203.5,732) scale(1,1.0)" x="0" y="0" font-size="10.1" fill="#440044" stroke="#440044" stroke-width="0" text-anchor="start" >SWITCH</text>
<line x1="45" y1="673.5" x2="102.8" y2="673.5" stroke="#a02c2c" stroke-width="1.4" />
<line x1="102.8" y1="673.5" x2="131.2" y2="673.5" stroke="#4aa6b0" stroke-width="1.4" />
<circle cx="45.5" cy="673.6" r="1.5" fill="#a00000"/>
<path d="M131.2,645.3 L189,673.5 L131.2,702.7 Z" stroke="#1a1ac8" stroke-width="1.4" fill="none" />
<text transform="translate(142.3,679.4) scale(1,1.09)" x="0" y="0" font-size="20" fill="#0000a4" stroke="#0000a4" stroke-width="0.22" text-anchor="start" >0</text>
<line x1="189" y1="673.5" x2="217.8" y2="673.5" stroke="#4aa6b0" stroke-width="1.4" />
<line x1="217.8" y1="673.5" x2="239" y2="673.5" stroke="#108c10" stroke-width="1.4" />
<path d="M217.8,658.9 L232.6,673.5 L217.8,688.5" stroke="#108c10" stroke-width="1.4" fill="none" />
<line x1="239" y1="651.5" x2="239" y2="696" stroke="#108c10" stroke-width="1.5" />
<text transform="translate(45,657.5) scale(1,1.0)" x="0" y="0" font-size="9.9" fill="#0000a4" stroke="#0000a4" stroke-width="0" text-anchor="start" >Bit=0</text>
<text transform="translate(45,671.9) scale(1,1.0)" x="0" y="0" font-size="9.9" fill="#1a1a1a" stroke="#1a1a1a" stroke-width="0" text-anchor="start" >UN_OUT02</text>
<text transform="translate(1081.1,309.7) scale(1,1.09)" x="0" y="0" font-size="20" fill="#0000a4" stroke="#0000a4" stroke-width="0.22" text-anchor="start" >ED-588</text>
<text transform="translate(1296.7,352.7) scale(1,1.09)" x="0" y="0" font-size="20.2" fill="#0000a4" stroke="#0000a4" stroke-width="0.22" text-anchor="start" >External Circuit</text>
<text transform="translate(1303.1,380) scale(1,1.09)" x="0" y="0" font-size="23.3" fill="#440044" stroke="#440044" stroke-width="0.22" text-anchor="start" >24VOLTS</text>
<line x1="1300.8" y1="381" x2="1350.0" y2="381" stroke="#3a44c4" stroke-width="2" />
<line x1="1325.5" y1="382" x2="1325.5" y2="387" stroke="#108c10" stroke-width="1.4" />
<line x1="1325.5" y1="387" x2="1325.5" y2="414.6" stroke="#4aa6b0" stroke-width="1.4" />
<line x1="1325.5" y1="414.6" x2="1325.5" y2="443.3" stroke="#a02c2c" stroke-width="1.4" />
<line x1="1324.8" y1="443.3" x2="1339.5" y2="443.3" stroke="#4aa6b0" stroke-width="1.4" />
<line x1="1324.8" y1="458.1" x2="1339.5" y2="458.1" stroke="#4aa6b0" stroke-width="1.4" />
<line x1="1325.5" y1="458.1" x2="1325.5" y2="486.6" stroke="#a02c2c" stroke-width="1.4" />
<line x1="1325.5" y1="486.6" x2="1325.5" y2="502.2" stroke="#4aa6b0" stroke-width="1.4" />
<line x1="1325.5" y1="502.2" x2="1325.5" y2="505" stroke="#108c10" stroke-width="1.4" />
<path d="M1325.5,504.6 L1319.3,508 L1330.9,513.8 L1319.3,519.6 L1330.9,525.3 L1319.3,531.1 L1330.9,536.9 L1325.5,540.4" stroke="#1a1ac8" stroke-width="1.3" fill="none" />
<line x1="1325.5" y1="540.4" x2="1325.5" y2="545" stroke="#108c10" stroke-width="1.4" />
<line x1="1325.5" y1="545" x2="1325.5" y2="558.3" stroke="#4aa6b0" stroke-width="1.4" />
<line x1="1325.5" y1="558.3" x2="1325.5" y2="587.3" stroke="#a02c2c" stroke-width="1.4" />
<text transform="translate(1333.1,519) scale(1,1.0)" x="0" y="0" font-size="10" fill="#440044" stroke="#440044" stroke-width="0" text-anchor="start" >1K</text>
<circle cx="1375.3" cy="450.3" r="28.6" stroke="#108c10" stroke-width="1.3" fill="none"/>
<path d="M1339.5,443.3 H1354.5 L1368.5,429.4 H1378.0" stroke="#108c10" stroke-width="1.3" fill="none" />
<path d="M1339.5,458.1 H1354.5 L1368.5,472.2 H1376.0 V470.6" stroke="#108c10" stroke-width="1.3" fill="none" />
<path d="M1378.0,429.4 C1383.0,429.4 1385.9,433 1385.9,438 V463 C1385.9,468 1383.0,470.6 1376.0,470.6" stroke="#440044" stroke-width="1.3" fill="none" />
<ellipse cx="1377.3" cy="441.1" rx="7.6" ry="3.9" stroke="#440044" stroke-width="1.3" fill="none"/>
<ellipse cx="1377.3" cy="450.0" rx="7.6" ry="3.9" stroke="#440044" stroke-width="1.3" fill="none"/>
<ellipse cx="1377.3" cy="458.9" rx="7.6" ry="3.9" stroke="#440044" stroke-width="1.3" fill="none"/>
<path d="M1387.3,441.0 L1393.7,435.1 L1388.6,435.1 L1395.5,428.2" stroke="#440044" stroke-width="1.2" fill="none" />
<polygon points="1396.5,427.2 1392.3,427.6 1396.1,431.5" fill="#440044" stroke="#440044" stroke-width="1"/>
<path d="M1397.3,441.0 L1403.7,435.1 L1398.6,435.1 L1405.5,428.2" stroke="#440044" stroke-width="1.2" fill="none" />
<polygon points="1406.5,427.2 1402.3,427.6 1406.1,431.5" fill="#440044" stroke="#440044" stroke-width="1"/>
<path d="M1387.3,459.6 L1393.7,465.5 L1388.6,465.5 L1395.5,472.4" stroke="#440044" stroke-width="1.2" fill="none" />
<polygon points="1396.5,473.4 1392.3,473.0 1396.1,469.1" fill="#440044" stroke="#440044" stroke-width="1"/>
<path d="M1397.3,459.6 L1403.7,465.5 L1398.6,465.5 L1405.5,472.4" stroke="#440044" stroke-width="1.2" fill="none" />
<polygon points="1406.5,473.4 1402.3,473.0 1406.1,469.1" fill="#440044" stroke="#440044" stroke-width="1"/>
<line x1="1325.5" y1="760" x2="1325.5" y2="814.8" stroke="#a02c2c" stroke-width="1.4" />
<line x1="1325.5" y1="814.8" x2="1325.5" y2="817" stroke="#4aa6b0" stroke-width="1.4" />
<line x1="1325.5" y1="817" x2="1325.5" y2="845" stroke="#108c10" stroke-width="1.4" />
<line x1="1310.6" y1="832" x2="1340.2" y2="832" stroke="#3c3cc8" stroke-width="1.6" />
<line x1="1314.7" y1="836.2" x2="1335.9" y2="836.2" stroke="#3c3cc8" stroke-width="1.6" />
<line x1="1319.1" y1="840.5" x2="1331.5" y2="840.5" stroke="#3c3cc8" stroke-width="1.6" />
<circle cx="1325.5" cy="845" r="1.2" fill="#108c10"/>
<text transform="translate(1354.5,497.8) scale(1,1.09)" x="0" y="0" font-size="15.2" fill="#0000a4" stroke="#0000a4" stroke-width="0.22" text-anchor="start" >LAMP= ON</text>
<text transform="translate(1354.5,540.9) scale(1,1.09)" x="0" y="0" font-size="15.2" fill="#0000a4" stroke="#0000a4" stroke-width="0.22" text-anchor="start" >Resistor current= 24mA</text>
<text transform="translate(1354.5,584) scale(1,1.09)" x="0" y="0" font-size="15.2" fill="#0000a4" stroke="#0000a4" stroke-width="0.22" text-anchor="start" >OUTPUT PIN=~0V</text>
<text transform="translate(1339.6,757) scale(1,1.09)" x="0" y="0" font-size="15.4" fill="#0000a4" stroke="#0000a4" stroke-width="0.22" text-anchor="start" >ALWAYS CONNECT</text>
<text transform="translate(1340.1,786.1) scale(1,1.09)" x="0" y="0" font-size="15.4" fill="#0000a4" stroke="#0000a4" stroke-width="0.22" text-anchor="start" >EXTERNAL GROUND</text>
<line x1="1092.5" y1="500.8" x2="1258.2" y2="500.8" stroke="#3aa03a" stroke-width="1.5" />
<line x1="1092.5" y1="789.2" x2="1258.2" y2="789.2" stroke="#3aa03a" stroke-width="1.5" />
<line x1="1200.3" y1="500" x2="1200.3" y2="790" stroke="#108c10" stroke-width="1.4" />
<line x1="1257.2" y1="500" x2="1257.2" y2="790" stroke="#108c10" stroke-width="1.8" />
<path d="M1200.3,506.7 H1220.8" stroke="#108c10" stroke-width="1.2" fill="none" />
<path d="M1200.3,783.3 H1220.8" stroke="#108c10" stroke-width="1.2" fill="none" />
<path d="M1220.8,506.7 A24,24 0 0 0 1219.1,551.5999999999999 A7.6,7.6 0 0 1 1219.1,565.4 A24,24 0 0 0 1219.1,609.0 A7.6,7.6 0 0 1 1219.1,622.8000000000001 A24,24 0 0 0 1219.1,666.4 A7.6,7.6 0 0 1 1219.1,680.2 A24,24 0 0 0 1219.1,723.8 A7.6,7.6 0 0 1 1219.1,737.6 A24,24 0 0 0 1220.8,783.3" stroke="#108c10" stroke-width="1.2" fill="none" />
<circle cx="1229.1" cy="529.8" r="14.2" stroke="#108c10" stroke-width="1.2" fill="none"/>
<circle cx="1229.1" cy="529.8" r="11.8" stroke="#108c10" stroke-width="1.2" fill="none"/>
<line x1="1217.55" y1="533.42" x2="1239.3" y2="523.28" stroke="#108c10" stroke-width="1.1" />
<line x1="1218.9" y1="536.32" x2="1240.65" y2="526.18" stroke="#108c10" stroke-width="1.1" />
<rect x="1252.0" y="519.3" width="3.4" height="21" stroke="#108c10" stroke-width="1.1" fill="none"/>
<circle cx="1229.1" cy="587.2" r="14.2" stroke="#108c10" stroke-width="1.2" fill="none"/>
<circle cx="1229.1" cy="587.2" r="11.8" stroke="#108c10" stroke-width="1.2" fill="none"/>
<line x1="1222.05" y1="597.04" x2="1233.32" y2="575.85" stroke="#108c10" stroke-width="1.1" />
<line x1="1224.88" y1="598.55" x2="1236.15" y2="577.36" stroke="#108c10" stroke-width="1.1" />
<rect x="1252.0" y="576.7" width="3.4" height="21" stroke="#108c10" stroke-width="1.1" fill="none"/>
<circle cx="1229.1" cy="644.6" r="14.2" stroke="#108c10" stroke-width="1.2" fill="none"/>
<circle cx="1229.1" cy="644.6" r="11.8" stroke="#108c10" stroke-width="1.2" fill="none"/>
<line x1="1230.7" y1="632.6" x2="1230.7" y2="656.6" stroke="#108c10" stroke-width="1.1" />
<line x1="1227.5" y1="632.6" x2="1227.5" y2="656.6" stroke="#108c10" stroke-width="1.1" />
<rect x="1252.0" y="634.1" width="3.4" height="21" stroke="#108c10" stroke-width="1.1" fill="none"/>
<circle cx="1229.1" cy="702.0" r="14.2" stroke="#108c10" stroke-width="1.2" fill="none"/>
<circle cx="1229.1" cy="702.0" r="11.8" stroke="#108c10" stroke-width="1.2" fill="none"/>
<line x1="1230.7" y1="690.0" x2="1230.7" y2="714.0" stroke="#108c10" stroke-width="1.1" />
<line x1="1227.5" y1="690.0" x2="1227.5" y2="714.0" stroke="#108c10" stroke-width="1.1" />
<rect x="1252.0" y="691.5" width="3.4" height="21" stroke="#108c10" stroke-width="1.1" fill="none"/>
<circle cx="1229.1" cy="759.6" r="14.2" stroke="#108c10" stroke-width="1.2" fill="none"/>
<circle cx="1229.1" cy="759.6" r="11.8" stroke="#108c10" stroke-width="1.2" fill="none"/>
<line x1="1224.88" y1="748.25" x2="1236.15" y2="769.44" stroke="#108c10" stroke-width="1.1" />
<line x1="1222.05" y1="749.76" x2="1233.32" y2="770.95" stroke="#108c10" stroke-width="1.1" />
<rect x="1252.0" y="749.1" width="3.4" height="21" stroke="#108c10" stroke-width="1.1" fill="none"/>
<text transform="translate(1154.0,525.5) scale(1,1.05)" x="0" y="0" font-size="12.4" fill="#440044" stroke="#440044" stroke-width="0.1" text-anchor="end" >D OUT3</text>
<text transform="translate(1198.1,525.5) scale(1,1.05)" x="0" y="0" font-size="12.4" fill="#440044" stroke="#440044" stroke-width="0.1" text-anchor="end" >(Pin 5)</text>
<text transform="translate(1154.0,582.9) scale(1,1.05)" x="0" y="0" font-size="12.4" fill="#440044" stroke="#440044" stroke-width="0.1" text-anchor="end" >D OUT2</text>
<text transform="translate(1198.1,582.9) scale(1,1.05)" x="0" y="0" font-size="12.4" fill="#440044" stroke="#440044" stroke-width="0.1" text-anchor="end" >(Pin 4)</text>
<text transform="translate(1154.0,640.2) scale(1,1.05)" x="0" y="0" font-size="12.4" fill="#440044" stroke="#440044" stroke-width="0.1" text-anchor="end" >D OUT1</text>
<text transform="translate(1198.1,640.2) scale(1,1.05)" x="0" y="0" font-size="12.4" fill="#440044" stroke="#440044" stroke-width="0.1" text-anchor="end" >(Pin 3)</text>
<text transform="translate(1154.0,697.5) scale(1,1.05)" x="0" y="0" font-size="12.4" fill="#440044" stroke="#440044" stroke-width="0.1" text-anchor="end" >D OUT0</text>
<text transform="translate(1198.1,697.5) scale(1,1.05)" x="0" y="0" font-size="12.4" fill="#440044" stroke="#440044" stroke-width="0.1" text-anchor="end" >(Pin 2)</text>
<text transform="translate(1144.5,754.9) scale(1,1.05)" x="0" y="0" font-size="12.4" fill="#440044" stroke="#440044" stroke-width="0.1" text-anchor="end" >GND</text>
<text transform="translate(1198.1,754.9) scale(1,1.05)" x="0" y="0" font-size="12.4" fill="#440044" stroke="#440044" stroke-width="0.1" text-anchor="end" >(Pin 1)</text>
<path d="M1008.8,616 V587.4 H1325.5" stroke="#a02c2c" stroke-width="1.4" fill="none" />
<path d="M1008.8,731 V760 H1325.5" stroke="#a02c2c" stroke-width="1.4" fill="none" />
<line x1="1008.8" y1="616" x2="1008.8" y2="653.7" stroke="#4aa6b0" stroke-width="1.4" />
<line x1="1008.8" y1="694.3" x2="1008.8" y2="731" stroke="#4aa6b0" stroke-width="1.4" />
<line x1="1006.2" y1="652.2" x2="1006.2" y2="695.6" stroke="#108c10" stroke-width="1.5" />
<circle cx="1008.8" cy="656.7" r="3" stroke="#4aa6b0" stroke-width="1.3" fill="none"/>
<circle cx="1008.8" cy="691.2" r="3" stroke="#4aa6b0" stroke-width="1.3" fill="none"/>
<text transform="translate(1002,642.8) scale(1,1.0)" x="0" y="0" font-size="10" fill="#440044" stroke="#440044" stroke-width="0" text-anchor="start" >1</text>
<text transform="translate(1002,712) scale(1,1.0)" x="0" y="0" font-size="10" fill="#440044" stroke="#440044" stroke-width="0" text-anchor="start" >2</text>
<line x1="778.6" y1="673.6" x2="851.2" y2="673.6" stroke="#a02c2c" stroke-width="1.4" />
<line x1="851.2" y1="673.6" x2="879.5" y2="673.6" stroke="#4aa6b0" stroke-width="1.4" />
<circle cx="779" cy="673.7" r="1.5" fill="#a00000"/>
<path d="M879.5,644.8 L937,673.6 L879.5,702.4 Z" stroke="#1a1ac8" stroke-width="1.4" fill="none" />
<text transform="translate(890.5,679.4) scale(1,1.09)" x="0" y="0" font-size="20" fill="#0000a4" stroke="#0000a4" stroke-width="0.22" text-anchor="start" >1</text>
<line x1="937" y1="673.6" x2="965.4" y2="673.6" stroke="#4aa6b0" stroke-width="1.4" />
<line x1="965.4" y1="673.6" x2="1006.2" y2="673.6" stroke="#108c10" stroke-width="1.4" />
<path d="M980.1,659.3 L994.6,673.6 L980.1,688.2" stroke="#108c10" stroke-width="1.4" fill="none" />
<text transform="translate(793,657.5) scale(1,1.0)" x="0" y="0" font-size="9.9" fill="#0000a4" stroke="#0000a4" stroke-width="0" text-anchor="start" >Bit=1</text>
<text transform="translate(778.4,671.9) scale(1,1.0)" x="0" y="0" font-size="9.9" fill="#1a1a1a" stroke="#1a1a1a" stroke-width="0" text-anchor="start" >UN_OUT02</text>
<line x1="7" y1="918.3" x2="1903" y2="918.3" stroke="#108c10" stroke-width="1.5" />
<line x1="7" y1="947.2" x2="1903" y2="947.2" stroke="#2a9a2a" stroke-width="1.5" />
<line x1="301.2" y1="918" x2="301.2" y2="947.5" stroke="#108c10" stroke-width="1.5" />
<line x1="672.7" y1="918" x2="672.7" y2="947.5" stroke="#108c10" stroke-width="1.5" />
<line x1="1045" y1="918" x2="1045" y2="947.5" stroke="#108c10" stroke-width="1.5" />
<line x1="1416.2" y1="918" x2="1416.2" y2="947.5" stroke="#108c10" stroke-width="1.5" />
<line x1="1787.5" y1="918" x2="1787.5" y2="947.5" stroke="#108c10" stroke-width="1.5" />
<text transform="translate(145,939.1) scale(1,1.09)" x="0" y="0" font-size="19.5" fill="#0000a4" stroke="#0000a4" stroke-width="0.22" text-anchor="middle" >1</text>
<text transform="translate(487.3,939.1) scale(1,1.09)" x="0" y="0" font-size="19.5" fill="#0000a4" stroke="#0000a4" stroke-width="0.22" text-anchor="middle" >2</text>
<text transform="translate(859.3,939.1) scale(1,1.09)" x="0" y="0" font-size="19.5" fill="#0000a4" stroke="#0000a4" stroke-width="0.22" text-anchor="middle" >3</text>
<text transform="translate(1231,939.1) scale(1,1.09)" x="0" y="0" font-size="19.5" fill="#0000a4" stroke="#0000a4" stroke-width="0.22" text-anchor="middle" >4</text>
<text transform="translate(1602,939.1) scale(1,1.09)" x="0" y="0" font-size="19.5" fill="#0000a4" stroke="#0000a4" stroke-width="0.22" text-anchor="middle" >5</text>
<line x1="1627.5" y1="817.5" x2="1627.5" y2="918.5" stroke="#108c10" stroke-width="1.5" />
<line x1="1627.5" y1="817.5" x2="1903" y2="817.5" stroke="#108c10" stroke-width="1.5" />
<line x1="1627.5" y1="853.3" x2="1903" y2="853.3" stroke="#108c10" stroke-width="1.5" />
<line x1="1627.5" y1="889.5" x2="1903" y2="889.5" stroke="#108c10" stroke-width="1.5" />
<line x1="1627.5" y1="904.2" x2="1903" y2="904.2" stroke="#108c10" stroke-width="1.5" />
<text transform="translate(1634.6,834.2) scale(1,1.0)" x="0" y="0" font-size="10.2" fill="#0000a4" stroke="#0000a4" stroke-width="0" text-anchor="start" >Title</text>
<text transform="translate(1663.5,843) scale(1,1.09)" x="0" y="0" font-size="15.4" fill="#440044" stroke="#440044" stroke-width="0.22" text-anchor="start" >ETHERNET TO DIO 7 DI 3DO 2 PORT</text>
<text transform="translate(1634.6,870.3) scale(1,1.0)" x="0" y="0" font-size="10.2" fill="#0000a4" stroke="#0000a4" stroke-width="0" text-anchor="start" >Number</text>
<text transform="translate(1684.8,878.7) scale(1,1.09)" x="0" y="0" font-size="15.3" fill="#440044" stroke="#440044" stroke-width="0.22" text-anchor="start" >90ED073R2</text>
<text transform="translate(1634.6,900.5) scale(1,1.0)" x="0" y="0" font-size="9.9" fill="#0000a4" stroke="#0000a4" stroke-width="0" text-anchor="start" >Date:</text>
<text transform="translate(1663.8,900.5) scale(1,1.0)" x="0" y="0" font-size="9.9" fill="#440044" stroke="#440044" stroke-width="0" text-anchor="start" >10-7-2013_16:19</text>
<text transform="translate(1634.6,915) scale(1,1.0)" x="0" y="0" font-size="9.9" fill="#0000a4" stroke="#0000a4" stroke-width="0" text-anchor="start" >Drawn By:</text>
<text transform="translate(1684.8,915) scale(1,1.0)" x="0" y="0" font-size="9.9" fill="#440044" stroke="#440044" stroke-width="0" text-anchor="start" >EAMONN</text>
</svg>
</div>
<div class="a" style="left:7px;top:102px;width:1896px;height:5px;background:linear-gradient(rgba(30,30,50,0.4),rgba(0,0,0,0));"></div>
<div class="a" style="left:1899px;top:102px;width:4px;height:888px;background:linear-gradient(90deg,rgba(0,0,0,0),rgba(0,0,0,0.28));"></div>
<div class="a" style="left:7px;top:102px;width:4px;height:888px;background:linear-gradient(90deg,rgba(0,0,0,0.3),rgba(0,0,0,0));"></div>
<div class="a" style="left:7px;top:990px;width:1896px;height:1px;background:#474747;"></div>
<div class="a" style="left:7px;top:991px;width:1896px;height:1px;background:#f4f4f4;"></div>
<div class="a" style="left:7px;top:992px;width:1896px;height:1px;background:#111;"></div>
<div class="a" style="left:7px;top:993px;width:1896px;height:4px;background:#4a4a4a;"></div>
<div class="a" style="left:1904px;top:533px;width:15px;height:447px;background:#cdcdcd;"></div>
<svg class="a" style="left:1907px;top:986px;" width="9" height="7" viewBox="0 0 9 7"><path d="M0.5,1 L4.5,5.5 L8.5,1" fill="none" stroke="#444" stroke-width="1.8"/></svg>
<div class="a" style="left:7px;top:997px;width:1913px;height:17px;background:#f0f0f0;"></div>
<div class="a" style="left:7px;top:997px;width:110px;height:17px;background:linear-gradient(#f6f6f6,#ececec);"></div>
<div class="a tt" style="left:19px;top:999px;font-size:11px;">42.02 x 29.70 cm</div>
<svg class="a" style="left:122px;top:1001px;" width="7" height="9" viewBox="0 0 7 9"><path d="M6,0.5 L1.5,4.5 L6,8.5" fill="none" stroke="#444" stroke-width="1.8"/></svg>
<div class="a" style="left:251px;top:998px;width:1378px;height:14px;background:#cdcdcd;"></div>
<svg class="a" style="left:1891px;top:1001px;" width="7" height="9" viewBox="0 0 7 9"><path d="M1,0.5 L5.5,4.5 L1,8.5" fill="none" stroke="#444" stroke-width="1.8"/></svg>
<div class="a" style="left:0;top:1014px;width:1920px;height:26px;background:linear-gradient(#fafafa,#efefef 50%,#dcdcdc);"></div>
<svg class="a" style="left:2px;top:1021px;" width="8" height="12" viewBox="0 0 8 12"><rect x="1" y="1" width="1.6" height="1.6" fill="#fff"/><rect x="0" y="0" width="1.6" height="1.6" fill="#bdbdbd"/><rect x="5" y="1" width="1.6" height="1.6" fill="#fff"/><rect x="4" y="0" width="1.6" height="1.6" fill="#bdbdbd"/><rect x="1" y="5" width="1.6" height="1.6" fill="#fff"/><rect x="0" y="4" width="1.6" height="1.6" fill="#bdbdbd"/><rect x="5" y="5" width="1.6" height="1.6" fill="#fff"/><rect x="4" y="4" width="1.6" height="1.6" fill="#bdbdbd"/><rect x="1" y="9" width="1.6" height="1.6" fill="#fff"/><rect x="0" y="8" width="1.6" height="1.6" fill="#bdbdbd"/><rect x="5" y="9" width="1.6" height="1.6" fill="#fff"/><rect x="4" y="8" width="1.6" height="1.6" fill="#bdbdbd"/></svg>
<svg class="a" style="left:17px;top:1018px;" width="14" height="17" viewBox="0 0 14 17"><rect x="1" y="1" width="2" height="16" fill="#d8d8d8" stroke="#888" stroke-width="0.6"/><path d="M3,1 Q7,3 13,1 V10 Q7,12 3,10 Z" fill="#f2d200" stroke="#b89a00" stroke-width="0.6"/></svg>
<div class="a tt" style="left:35px;top:1020px;">Options</div>
<svg class="a" style="left:84px;top:1025px;" width="7" height="4" viewBox="0 0 7 4"><path d="M0,0 H7 L3.5,4 Z" fill="#000"/></svg>
<svg class="a" style="left:827px;top:1021px;" width="8" height="12" viewBox="0 0 8 12"><rect x="1" y="1" width="1.6" height="1.6" fill="#fff"/><rect x="0" y="0" width="1.6" height="1.6" fill="#bdbdbd"/><rect x="5" y="1" width="1.6" height="1.6" fill="#fff"/><rect x="4" y="0" width="1.6" height="1.6" fill="#bdbdbd"/><rect x="1" y="5" width="1.6" height="1.6" fill="#fff"/><rect x="0" y="4" width="1.6" height="1.6" fill="#bdbdbd"/><rect x="5" y="5" width="1.6" height="1.6" fill="#fff"/><rect x="4" y="4" width="1.6" height="1.6" fill="#bdbdbd"/><rect x="1" y="9" width="1.6" height="1.6" fill="#fff"/><rect x="0" y="8" width="1.6" height="1.6" fill="#bdbdbd"/><rect x="5" y="9" width="1.6" height="1.6" fill="#fff"/><rect x="4" y="8" width="1.6" height="1.6" fill="#bdbdbd"/></svg>
<svg class="a" style="left:841px;top:1018px;" width="15" height="16" viewBox="0 0 15 16"><rect x="0.5" y="0.5" width="3.5" height="15" rx="1" fill="#a9c8ec"/><path d="M14,0.5 L5,8 L14,15.5 Z" fill="#a9c8ec"/></svg>
<svg class="a" style="left:866px;top:1018px;" width="14" height="16" viewBox="0 0 14 16"><path d="M13,0.5 L1,8 L13,15.5 Z" fill="#a9c8ec"/></svg>
<div class="a" style="left:887px;top:1017px;width:1px;height:20px;background:#c6c6c6;border-right:1px solid #fafafa;"></div>
<div class="a" style="left:894px;top:1018px;width:60px;height:18px;background:#ececec;"></div>
<div class="a tt" style="left:920px;top:1020px;color:#555;">1</div>
<div class="a tt" style="left:958px;top:1020px;">of 1</div>
<div class="a" style="left:984px;top:1017px;width:1px;height:20px;background:#c6c6c6;border-right:1px solid #fafafa;"></div>
<svg class="a" style="left:994px;top:1018px;" width="14" height="16" viewBox="0 0 14 16"><path d="M1,0.5 L13,8 L1,15.5 Z" fill="#a9c8ec"/></svg>
<svg class="a" style="left:1019px;top:1018px;" width="15" height="16" viewBox="0 0 15 16"><rect x="11" y="0.5" width="3.5" height="15" rx="1" fill="#a9c8ec"/><path d="M1,0.5 L10,8 L1,15.5 Z" fill="#a9c8ec"/></svg>
<div class="a" style="left:1039px;top:1017px;width:1px;height:20px;background:#c6c6c6;border-right:1px solid #fafafa;"></div>
<svg class="a" style="left:1045px;top:1017px;" width="18" height="18" viewBox="0 0 18 18"><defs><radialGradient id="g10541026" cx="40%" cy="35%" r="70%"><stop offset="0" stop-color="#9ef08a"/><stop offset="0.55" stop-color="#5fd04a"/><stop offset="1" stop-color="#128a12"/></radialGradient></defs><circle cx="9" cy="9" r="8" fill="url(#g10541026)"/><path d="M4,9 L8.5,4.8 V7.3 H13.5 V10.7 H8.5 V13.2 Z" fill="#f4fbf2"/></svg>
<svg class="a" style="left:1071px;top:1017px;" width="18" height="18" viewBox="0 0 18 18"><defs><radialGradient id="g10801026" cx="40%" cy="35%" r="70%"><stop offset="0" stop-color="#d8f0d0"/><stop offset="0.55" stop-color="#a9d89f"/><stop offset="1" stop-color="#8cc684"/></radialGradient></defs><circle cx="9" cy="9" r="8" fill="url(#g10801026)"/><path d="M14,9 L9.5,4.8 V7.3 H4.5 V10.7 H9.5 V13.2 Z" fill="#eef7ec"/></svg>
<svg class="a" style="left:1755px;top:1021px;" width="8" height="12" viewBox="0 0 8 12"><rect x="1" y="1" width="1.6" height="1.6" fill="#fff"/><rect x="0" y="0" width="1.6" height="1.6" fill="#bdbdbd"/><rect x="5" y="1" width="1.6" height="1.6" fill="#fff"/><rect x="4" y="0" width="1.6" height="1.6" fill="#bdbdbd"/><rect x="1" y="5" width="1.6" height="1.6" fill="#fff"/><rect x="0" y="4" width="1.6" height="1.6" fill="#bdbdbd"/><rect x="5" y="5" width="1.6" height="1.6" fill="#fff"/><rect x="4" y="4" width="1.6" height="1.6" fill="#bdbdbd"/><rect x="1" y="9" width="1.6" height="1.6" fill="#fff"/><rect x="0" y="8" width="1.6" height="1.6" fill="#bdbdbd"/><rect x="5" y="9" width="1.6" height="1.6" fill="#fff"/><rect x="4" y="8" width="1.6" height="1.6" fill="#bdbdbd"/></svg>
<svg class="a" style="left:1769px;top:1017px;" width="17" height="19" viewBox="0 0 17 19"><path d="M1,0.5 H11 L16,5.5 V18.5 H1 Z" fill="#f2f6fa" stroke="#8da2bb"/><path d="M11,0.5 V5.5 H16" fill="#cfe0f2" stroke="#8da2bb" stroke-width="0.8"/></svg>
<div class="a" style="left:1791px;top:1015px;width:24px;height:24px;box-sizing:border-box;border:1px solid #c2a55a;border-radius:3px;background:linear-gradient(#fff6d2,#ffe58a 55%,#fdd35a);"></div>
<svg class="a" style="left:1794px;top:1017px;" width="18" height="20" viewBox="0 0 18 20"><rect x="1.5" y="0.5" width="15" height="7" fill="#f2f6fa" stroke="#8da2bb"/><path d="M1.5,10.5 H12 L16.5,14.5 V19.5 H1.5 Z" fill="#f2f6fa" stroke="#8da2bb"/></svg>
<svg class="a" style="left:1819px;top:1018px;" width="19" height="17" viewBox="0 0 19 17"><path d="M0.5,2.5 H6 L9,5 V16.5 H0.5 Z M9.5,2.5 H15 L18,5 V16.5 H9.5 Z" fill="#f2f6fa" stroke="#8da2bb"/></svg>
<svg class="a" style="left:1844px;top:1016px;" width="16" height="20" viewBox="0 0 16 20"><rect x="0.5" y="0.5" width="7" height="8" fill="#f2f6fa" stroke="#8da2bb"/><rect x="8.5" y="0.5" width="7" height="8" fill="#f2f6fa" stroke="#8da2bb"/><path d="M0.5,10.5 H5 L7.5,13 V19.5 H0.5 Z M8.5,10.5 H13 L15.5,13 V19.5 H8.5 Z" fill="#f2f6fa" stroke="#8da2bb"/></svg>
<svg class="a" style="left:1870px;top:1021px;" width="8" height="12" viewBox="0 0 8 12"><rect x="1" y="1" width="1.6" height="1.6" fill="#fff"/><rect x="0" y="0" width="1.6" height="1.6" fill="#bdbdbd"/><rect x="5" y="1" width="1.6" height="1.6" fill="#fff"/><rect x="4" y="0" width="1.6" height="1.6" fill="#bdbdbd"/><rect x="1" y="5" width="1.6" height="1.6" fill="#fff"/><rect x="0" y="4" width="1.6" height="1.6" fill="#bdbdbd"/><rect x="5" y="5" width="1.6" height="1.6" fill="#fff"/><rect x="4" y="4" width="1.6" height="1.6" fill="#bdbdbd"/><rect x="1" y="9" width="1.6" height="1.6" fill="#fff"/><rect x="0" y="8" width="1.6" height="1.6" fill="#bdbdbd"/><rect x="5" y="9" width="1.6" height="1.6" fill="#fff"/><rect x="4" y="8" width="1.6" height="1.6" fill="#bdbdbd"/></svg>
<svg class="a" style="left:1883px;top:1017px;" width="18" height="19" viewBox="0 0 18 19"><path d="M1,1 L6,6 L8,4 L12,10 L14,8 L17,17 L8,15 L10,13 L6,9 L4,11 Z" fill="#f88c1c" stroke="#e05010" stroke-width="0.7"/></svg>
<svg class="a" style="left:1909px;top:1025px;" width="7" height="4" viewBox="0 0 7 4"><path d="M0,0 H7 L3.5,4 Z" fill="#000"/></svg>
<div class="a" style="left:0;top:1040px;width:1920px;height:40px;background:#5b7fa4;"></div>
<svg class="a" style="left:0;top:1040px;" width="1920" height="40"><path d="M1337,0 H1452 L1420,40 H1297 Z" fill="#84a7bd"/><path d="M1566,0 H1679 L1633,40 H1541 Z" fill="#84a7bd"/></svg>
<div class="a tbtn" style="left:17px;width:58px;"></div>
<div class="a tbtn" style="left:79px;width:58px;"></div>
<div class="a tbtn" style="left:141px;width:53px;"></div>
<div class="a tbtn" style="left:195px;width:4px;"></div>
<div class="a tbtn" style="left:203px;width:53px;"></div>
<div class="a tbtn" style="left:257px;width:4px;"></div>
<div class="a tbtn" style="left:265px;width:58px;"></div>
<div class="a tbtn" style="left:451px;width:58px;"></div>
<div class="a tbtn" style="left:513px;width:58px;"></div>
<div class="a tbtn" style="left:575px;width:58px;"></div>
<div class="a tbtn" style="left:637px;width:58px;"></div>
<div class="a tbtn" style="left:699px;width:58px;background:rgba(220,232,245,0.45);border-color:rgba(230,240,250,0.8);"></div>
<svg class="a" style="left:30px;top:1044px;" width="32" height="30" viewBox="0 0 32 30"><rect x="0.5" y="0.5" width="29" height="28" rx="2" fill="#f6c650" stroke="#e49010"/><rect x="3" y="3" width="24" height="23" fill="#fde08a"/><ellipse cx="10" cy="12" rx="6.5" ry="8" fill="none" stroke="#e87a10" stroke-width="4"/><path d="M8,26 L26,18 V26 Z" fill="#fff6e0"/><circle cx="25" cy="14" r="5" fill="#fff4d0" stroke="#e8a020"/></svg>
<svg class="a" style="left:94px;top:1046px;" width="30" height="30" viewBox="0 0 30 30"><path d="M14,14 L1.88,7 A14,14 0 0 1 26.12,7 Z" fill="#db4437"/><path d="M14,14 L26.12,7 A14,14 0 0 1 14,28 Z" fill="#f4c20d"/><path d="M14,14 L14,28 A14,14 0 0 1 1.88,7 Z" fill="#0f9d58"/><circle cx="14" cy="14" r="6.5" fill="#fff"/><circle cx="14" cy="14" r="5.2" fill="#4285f4"/></svg>
<svg class="a" style="left:151px;top:1046px;" width="33" height="30" viewBox="0 0 33 30"><rect x="1" y="4" width="30" height="24" rx="2" fill="#f2d98a" stroke="#c8a848"/><rect x="4" y="1" width="10" height="5" fill="#f8f0d8"/><rect x="5" y="2" width="2" height="2" fill="#3b3"/><rect x="13" y="3" width="10" height="5" fill="#f8f0d8"/><rect x="14" y="4" width="2" height="2" fill="#d33"/><rect x="20" y="5" width="10" height="5" fill="#f8f0d8"/><rect x="21" y="6" width="2" height="2" fill="#38c"/><path d="M5,28 V19 Q5,16 8,16 H25 Q28,16 28,19 V28 H23 V21 H10 V28 Z" fill="#9fd8f8" stroke="#5aa0d0"/></svg>
<svg class="a" style="left:213px;top:1044px;" width="33" height="32" viewBox="0 0 33 32"><rect x="0" y="0" width="32" height="31" fill="#68217a"/><path d="M4,10 L9,8 L15,13 L23,5 L28,7 V24 L23,26 L15,18 L9,23 L4,21 Z M9,12 V19 L12,15.5 Z M23,11 L18,15.5 L23,20 Z" fill="#fff" fill-rule="evenodd"/></svg>
<svg class="a" style="left:278px;top:1044px;" width="32" height="31" viewBox="0 0 32 31"><path d="M0,4 L18,0 V31 L0,27 Z" fill="#2b579a"/><rect x="17" y="4" width="14" height="23" fill="#fff" stroke="#2b579a"/><path d="M19,8 H29 M19,11 H29 M19,14 H29 M19,17 H29 M19,20 H29 M19,23 H29" stroke="#2b579a" stroke-width="1.2"/><text x="9" y="20" font-size="12" font-weight="bold" text-anchor="middle" fill="#fff" font-family="Liberation Sans">W</text></svg>
<svg class="a" style="left:340px;top:1044px;" width="33" height="32" viewBox="0 0 33 32"><path d="M2,2 L24,5 V22 L2,20 Z" fill="#1a4fd0" stroke="#aac" stroke-width="1"/><path d="M4,4 L22,7 V10 L4,12 Z" fill="#4a90f0"/><path d="M10,22 L16,22 L17,26 H8 Z" fill="#ccc"/><circle cx="25" cy="25" r="6.5" fill="#f0f0f0" stroke="#999"/><path d="M21,26 L24,23 M29,24 L26,27" stroke="#2a8a2a" stroke-width="1.5"/></svg>
<svg class="a" style="left:401px;top:1044px;" width="34" height="33" viewBox="0 0 34 33"><ellipse cx="16" cy="17" rx="15" ry="9" fill="none" stroke="#e02020" stroke-width="1.6"/><circle cx="16" cy="18" r="10" fill="#2050a0"/><path d="M9,13 L16,10 L22,16 L14,24 Z" fill="#30a030"/><rect x="7" y="20" width="9" height="12" fill="#fff" stroke="#222"/><path d="M19,6 Q20,1 25,1 Q31,1 30,6 Q29,9 26,11 V15 H22 V10 Q26,8 26,6 Q26,4 25,4 Q23,4 23,7 Z M22,17 H26 V21 H22 Z" fill="#f8e020" stroke="#222" stroke-width="0.8"/></svg>
<svg class="a" style="left:469px;top:1045px;" width="26" height="30" viewBox="0 0 26 30"><path d="M1,6 L6,1 H25 V29 H1 Z" fill="#f8e088" stroke="#c8a838"/><circle cx="15" cy="5" r="3" fill="#e02020"/><text x="13" y="21" font-size="10.5" font-weight="bold" text-anchor="middle" fill="#1a3ac8" font-family="Liberation Sans">CAT</text></svg>
<svg class="a" style="left:528px;top:1045px;" width="29" height="30" viewBox="0 0 29 30"><circle cx="14.5" cy="15" r="12.5" fill="#12a5e6"/><circle cx="6" cy="6" r="5" fill="#12a5e6"/><circle cx="23" cy="24" r="5" fill="#12a5e6"/><text x="14.5" y="21.5" font-size="18" font-weight="bold" text-anchor="middle" fill="#fff" font-family="Liberation Sans">S</text></svg>
<svg class="a" style="left:591px;top:1044px;" width="26" height="33" viewBox="0 0 26 33"><rect x="1" y="1" width="9" height="8" rx="3" fill="#111"/><rect x="1" y="11" width="7" height="9" rx="1" fill="#111"/><rect x="10" y="12" width="13" height="8" rx="4" fill="#111"/><rect x="3" y="20" width="9" height="5" fill="#111"/><rect x="10" y="24" width="13" height="8" rx="4" fill="#111"/><rect x="8" y="7" width="4" height="8" fill="#111"/></svg>
<svg class="a" style="left:650px;top:1050px;" width="32" height="18" viewBox="0 0 32 18"><path d="M1,10 Q3,1 9,3 Q13,5 16,9 Q20,14 24,14 Q29,14 29,9 Q29,4 24,4 Q20,4 16,9 Q12,14 8,15 Q1,17 1,10 Z" fill="none" stroke="#3a7ad8" stroke-width="3.5"/><path d="M16,9 Q20,4 24,4 Q29,4 29,9 Q29,14 24,14 Q20,14 16,9" fill="none" stroke="#7a3ac8" stroke-width="3.5"/></svg>
<svg class="a" style="left:713px;top:1044px;" width="31" height="32" viewBox="0 0 31 32"><rect x="1" y="1" width="28" height="29" rx="2" fill="#dbeafa" stroke="#8aaed8"/><rect x="4" y="2" width="2" height="8" fill="#e83030"/><rect x="6" y="2" width="2" height="8" fill="#f0c020"/><rect x="8" y="2" width="2" height="8" fill="#30b030"/><rect x="10" y="2" width="2" height="8" fill="#3060e0"/><path d="M3,15 Q14,7 26,15 Q14,22 3,15 Z" fill="none" stroke="#2a5ab8" stroke-width="1.5"/><circle cx="14" cy="15" r="3.2" fill="#2a5ab8"/><rect x="12" y="18" width="17" height="10" fill="#e84428"/><text x="20.5" y="26.5" font-size="8.5" font-weight="bold" text-anchor="middle" fill="#fff" font-family="Liberation Sans">PDF</text></svg>
<svg class="a" style="left:1695px;top:1058px;" width="11" height="6" viewBox="0 0 11 6"><path d="M0.5,5.5 L5.5,0.5 L10.5,5.5 Z" fill="#fff"/></svg>
<svg class="a" style="left:1717px;top:1051px;" width="16" height="19" viewBox="0 0 16 19"><rect x="1" y="1" width="1.6" height="17" fill="#fff"/><path d="M3,2 Q7,0 9,2 Q11,4 15,2 V9 Q11,11 9,9 Q7,7 3,9 Z" fill="none" stroke="#fff" stroke-width="1.3"/></svg>
<svg class="a" style="left:1742px;top:1051px;" width="17" height="18" viewBox="0 0 17 18"><rect x="4" y="4" width="12" height="9" fill="none" stroke="#fff" stroke-width="1.4"/><rect x="1" y="1" width="4" height="7" rx="1" fill="#5b7fa4" stroke="#fff" stroke-width="1.2"/><path d="M10,13 V16 M6,17 H14" stroke="#fff" stroke-width="1.4"/></svg>
<svg class="a" style="left:1766px;top:1051px;" width="15" height="18" viewBox="0 0 15 18"><path d="M1,6 H4 L8,2 V16 L4,12 H1 Z" fill="#fff"/><path d="M10,5 Q12,9 10,13 M12,3 Q15,9 12,15" fill="none" stroke="#fff" stroke-width="1.3"/></svg>
<div class="a wt" style="left:1796px;top:1046px;letter-spacing:-0.9px;">ENG</div>
<div class="a wt" style="left:1800px;top:1063px;">UK</div>
<div class="a wt" style="left:1852px;top:1046px;letter-spacing:-0.7px;">14:22</div>
<div class="a wt" style="left:1835px;top:1063px;letter-spacing:-0.15px;">21/08/2013</div>
</body></html>
